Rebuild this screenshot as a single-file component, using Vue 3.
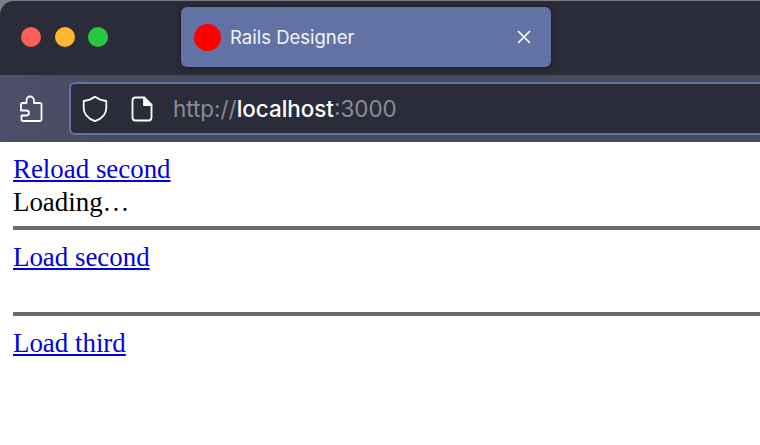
<script setup>
const sections = [
  { link: "Reload second", body: "Loading…" },
  { link: "Load second", body: "\u00A0" },
  { link: "Load third", body: "" },
];
</script>

<template>
  <div class="window">
    <header class="chrome">
      <div class="tabbar">
        <div class="lights">
          <span class="light red"></span>
          <span class="light yellow"></span>
          <span class="light green"></span>
        </div>
        <div class="tab">
          <span class="favicon"></span>
          <span class="tab-title">Rails Designer</span>
          <svg class="close" width="14" height="14" viewBox="0 0 14 14" fill="none" stroke="#fff" stroke-width="1.7" stroke-linecap="round">
            <path d="M1.5 1.5l11 11M12.5 1.5l-11 11" />
          </svg>
        </div>
      </div>
      <div class="toolbar">
        <svg class="puzzle" width="24" height="28" viewBox="0 0 24 28" fill="none" stroke="#fff" stroke-width="1.8" stroke-linejoin="round">
          <path d="M7.500 8V5.500C7.500 3 9 1.500 11 1.500S15 3 15 5.500V8h6c1 0 1.500.5 1.500 1.500v15c0 1-.5 1.500-1.500 1.500H4c-1 0-1.500-.5-1.500-1.500V20.500H7c1.800 0 3-1.200 3-2.500s-1.200-2.500-3-2.500H2V9.500C2 8.500 2.500 8 3.500 8z" />
        </svg>
        <div class="urlbar">
          <svg width="26" height="28" viewBox="0 0 26 28" fill="none" stroke="#fff" stroke-width="1.8" stroke-linejoin="round">
            <path d="M13 1.800C16 4 20 5.500 24.300 6v7c0 6.500-4.800 10.800-11.300 13.200C6.500 23.800 1.700 19.500 1.700 13V6C6 5.500 10 4 13 1.800z" />
          </svg>
          <svg class="page" width="22" height="26" viewBox="0 0 22 26" fill="none" stroke="#fff" stroke-width="1.8" stroke-linejoin="round">
            <path d="M4.500 1.500h8.500l7.500 7.500v12.500c0 2-1 3-3 3H4.500c-2 0-3-1-3-3v-17c0-2 1-3 3-3z" />
            <path d="M13 1.500v7.500h7.500z" fill="#fff" />
          </svg>
          <span class="url"><span class="dim">http://</span><span class="host">localhost</span><span class="dim">:3000</span></span>
        </div>
      </div>
    </header>
    <main class="page-body">
      <template v-for="(s, i) in sections" :key="i">
        <a href="#" class="link">{{ s.link }}</a>
        <div v-if="s.body" class="body-line" :class="{ tall: i === 0 }">{{ s.body }}</div>
        <hr v-if="i < sections.length - 1" class="rule" />
      </template>
    </main>
  </div>
</template>

<style>
html, body {
  margin: 0;
  background: #fff;
  overflow: hidden;
}
</style>

<style scoped>
.window {
  width: 760px;
  height: 445px;
  overflow: hidden;
}
.chrome {
  font-family: Inter, "Liberation Sans", sans-serif;
  background: #7c7c86;
  padding-top: 1px;
}
.tabbar {
  height: 74px;
  background: #2b2c39;
  border-top-left-radius: 14px;
  display: flex;
  align-items: flex-start;
}
.lights {
  display: flex;
  gap: 13.500px;
  padding: 26px 0 0 21px;
}
.light {
  width: 20px;
  height: 20px;
  border-radius: 50%;
}
.red { background: #fb5f57; }
.yellow { background: #fdb72d; }
.green { background: #29c640; }
.tab {
  margin: 6px 0 0 73px;
  width: 370px;
  height: 60px;
  box-sizing: border-box;
  padding: 0 20px 0 13px;
  background: #6272a4;
  border-radius: 6px;
  box-shadow: 0 1px 6px rgba(0, 0, 0, 0.45);
  display: flex;
  align-items: center;
}
.favicon {
  width: 27px;
  height: 27px;
  border-radius: 50%;
  background: #ff0000;
}
.tab-title {
  margin-left: 9px;
  flex: 1;
  font-size: 18.500px;
  color: #f2f4fa;
}
.close {
  flex: none;
}
.toolbar {
  height: 67px;
  box-sizing: border-box;
  background: linear-gradient(90deg, #4d4f6a, #484a5e 120px);
  padding: 7px 0 7px 19px;
  display: flex;
  align-items: center;
  gap: 26px;
}
.puzzle {
  flex: none;
}
.urlbar {
  flex: 1;
  height: 53px;
  box-sizing: border-box;
  margin-right: -10px;
  padding-left: 11px;
  background: #2b2c39;
  border: 2px solid #6272a4;
  border-radius: 6px;
  display: flex;
  align-items: center;
}
.page {
  margin-left: 23px;
}
.url {
  margin-left: 20px;
  font-size: 22.400px;
  color: #8b8b95;
}
.host {
  color: #fff;
  font-weight: 500;
}
.page-body {
  padding: 12px 13px 0;
  font-family: "Liberation Serif", serif;
  font-size: 26.900px;
  line-height: 31px;
  color: #000;
}
.link {
  color: #0000e0;
  text-decoration: underline;
  display: block;
  width: fit-content;
}
.body-line.tall {
  padding-top: 2px;
}
.rule {
  margin: 8px -13px 12.500px 0;
  height: 3.500px;
  border: none;
  background: #6b6b6b;
}
</style>
